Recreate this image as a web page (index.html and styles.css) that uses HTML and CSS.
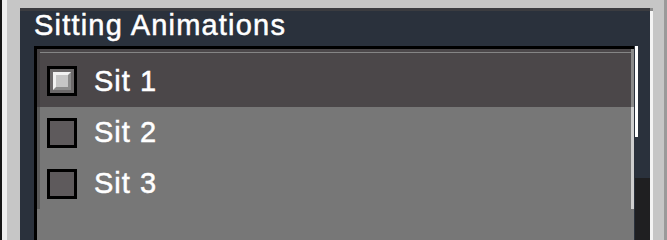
FILE: index.html
```html
<!DOCTYPE html>
<html>
<head>
<meta charset="utf-8">
<link rel="stylesheet" href="styles.css">
</head>
<body>
<div class="screen">
  <div class="edge-l"></div>
  <div class="gap-l"></div>
  <div class="pad-l"></div>
  <div class="panel">
    <div class="title">Sitting Animations</div>
    <div class="body">
      <div class="list">
        <div class="row hover"><span class="cb checked"><span class="tick"></span></span><span class="label">Sit 1</span></div>
        <div class="row"><span class="cb"></span><span class="label">Sit 2</span></div>
        <div class="row"><span class="cb"></span><span class="label">Sit 3</span></div>
      </div>
      <div class="scroll">
        <div class="thumb"></div>
        <div class="track"></div>
        <div class="shade"></div>
      </div>
    </div>
  </div>
  <div class="edge-r"><div class="notch"></div><div class="hl"></div></div>
  <div class="gap-r"></div>
  <div class="edge-rr"></div>
</div>
</body>
</html>
```
FILE: styles.css
```css
html, body {
  margin: 0;
  height: 100%;
  overflow: hidden;
  background: #c6c6c6;
}
.screen {
  display: flex;
  width: 667px;
  height: 100vh;
  min-height: 217px;
  font-family: "Liberation Sans", Arial, sans-serif;
}
.edge-l { width: 2px; background: #151515; }
.gap-l { width: 5px; background: #eeeeee; }
.pad-l { width: 13px; background: #c6c6c6; }
.panel {
  width: 630px;
  margin-top: 8px;
  background: #2a313c;
  border-top: 3px solid #3b3c40;
  display: flex;
  flex-direction: column;
}
.title {
  color: #ffffff;
  font-size: 29px;
  line-height: 28px;
  height: 28px;
  letter-spacing: 1.2px;
  padding-left: 14px;
  white-space: nowrap;
  -webkit-text-stroke: 0.5px #ffffff;
}
.body {
  display: flex;
  flex: 1;
  margin-top: 7px;
  padding-left: 14px;
}
.list {
  box-sizing: border-box;
  width: 600px;
  border-top: 3px solid #000;
  border-left: 3px solid #000;
  background: #777777;
  display: flex;
  flex-direction: column;
}
.row {
  box-sizing: border-box;
  height: 51px;
  display: flex;
  align-items: center;
  padding-left: 7px;
  border-left: 3px solid #5a5a5a;
  border-right: 3px solid #cfcfcf;
  background: #777777;
}
.row.hover {
  height: 58px;
  padding-top: 6px;
  border-left-color: #434042;
  border-right-color: #8a8a8a;
  background: linear-gradient(to bottom, #4b4749 0, #4b4749 3px, #858585 3px, #858585 4px, #4b4749 4px);
}
.cb {
  box-sizing: border-box;
  width: 30px;
  height: 30px;
  border: 3px solid #000;
  background: #5e5a5c;
  display: flex;
  padding: 3px;
  flex: none;
}
.cb.checked { background: #6c696a; }
.tick {
  box-sizing: border-box;
  width: 18px;
  height: 18px;
  background: #c6c6c6;
  border-top: 3px solid #f2f2f2;
  border-left: 3px solid #f2f2f2;
  border-right: 3px solid #8b8b8b;
  border-bottom: 3px solid #8b8b8b;
}
.label {
  margin-left: 17px;
  color: #ffffff;
  font-size: 29px;
  line-height: 29px;
  letter-spacing: 1px;
  white-space: nowrap;
  -webkit-text-stroke: 0.5px #ffffff;
}
.scroll {
  width: 16px;
  display: flex;
  flex-direction: column;
}
.thumb {
  width: 3px;
  height: 91px;
  margin-left: 1px;
  background: #ffffff;
}
.track { height: 41px; }
.shade {
  flex: 1;
  margin-left: 1px;
  background: #1f1f21;
}
.edge-r {
  width: 3px;
  display: flex;
  flex-direction: column;
}
.notch {
  height: 3px;
  margin-top: 8px;
  background: #8b8b8b;
}
.hl { flex: 1; background: #f4f4f4; }
.gap-r { width: 11px; background: #c6c6c6; }
.edge-rr { width: 3px; background: #9a9a9a; }
```
